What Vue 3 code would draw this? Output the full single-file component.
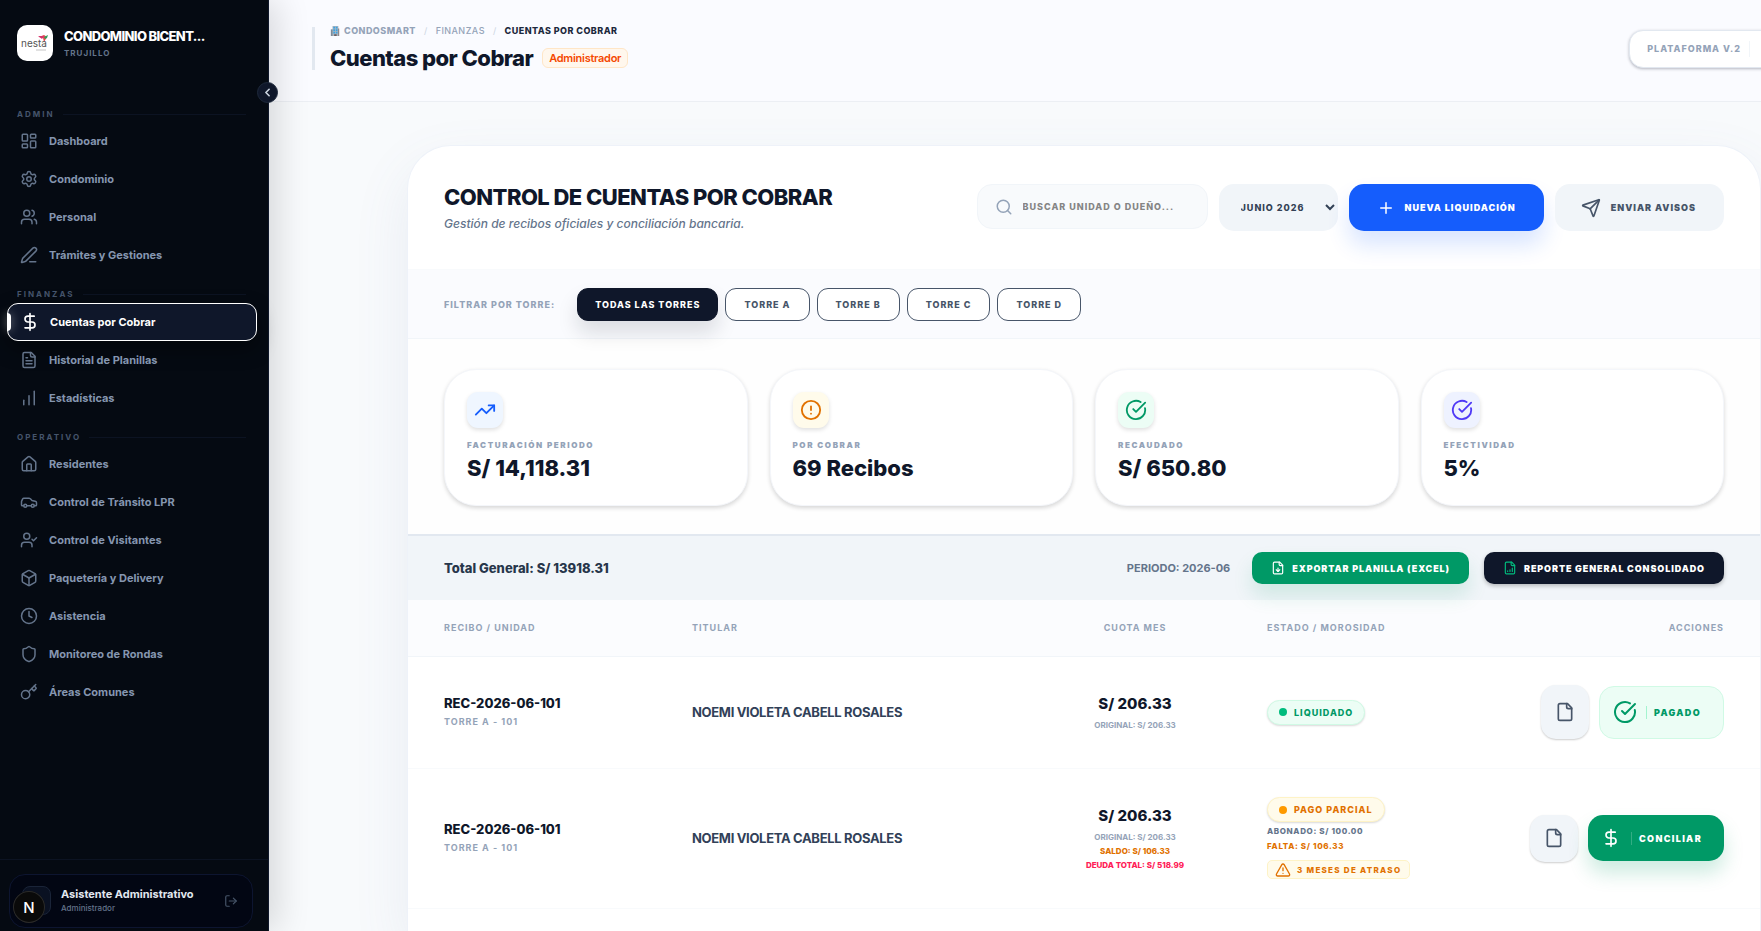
<template>
  <div class="layout">
    <aside class="sidebar">
      <div class="brand">
        <div class="brand-logo">
          <svg viewBox="0 0 36 36" aria-hidden="true">
            <path d="M22 12l4 1 1 4 3-5-3-2z" fill="#e5484d" />
            <path d="M27 12l4-2-1 3-2 1z" fill="#2f9e5b" />
            <path d="M21 11l6 0-2 3z" fill="#d6336c" />
            <text x="4" y="22">nesta</text>
            <path d="M19 25h10" stroke="#c4c4c4" stroke-width="1" />
          </svg>
        </div>
        <div class="brand-info">
          <strong>CONDOMINIO BICENT...</strong>
          <span>TRUJILLO</span>
        </div>
      </div>

      <button type="button" class="btn-colapsar" aria-label="Colapsar menú">
        <Icon name="chevron" />
      </button>

      <nav class="menu">
        <section v-for="grupo in menu" :key="grupo.titulo">
          <h2 class="menu-titulo">{{ grupo.titulo }}</h2>
          <a
            v-for="item in grupo.items"
            :key="item.texto"
            href="#"
            class="menu-item"
            :class="{ activo: item.texto === activo }"
            @click.prevent="activo = item.texto"
          >
            <Icon :name="item.icono" />
            <span>{{ item.texto }}</span>
          </a>
        </section>
      </nav>

      <div class="sidebar-footer">
        <div class="usuario">
          <div class="avatar"></div>
          <div class="usuario-info">
            <strong>Asistente Administrativo</strong>
            <span>Administrador</span>
          </div>
          <button type="button" class="btn-salir" aria-label="Cerrar sesión">
            <Icon name="salir" />
          </button>
          <div class="dev-badge">N</div>
        </div>
      </div>
    </aside>

    <main class="main">
      <header class="topbar">
        <div class="topbar-info">
          <div class="breadcrumb">
            <svg class="edificio" viewBox="0 0 12 12" aria-hidden="true">
              <path d="M1 4h3v8H1z" fill="#7d8b99" />
              <path d="M3 0h7v12H3z" fill="#a9b4c0" />
              <path d="M4 1h2v2H4zM7 1h2v2H7zM4 4h2v2H4zM7 4h2v2H7zM4 7h2v2H4zM7 7h2v2H7z" fill="#3aa3e3" />
              <path d="M5 10h3v2H5zM10 3h1v9h-1z" fill="#6b5d5d" />
            </svg>
            <strong>CONDOSMART</strong>
            <i>/</i>
            <span>FINANZAS</span>
            <i>/</i>
            <b>CUENTAS POR COBRAR</b>
          </div>
          <div class="topbar-titulo">
            <h1>Cuentas por Cobrar</h1>
            <span class="rol">Administrador</span>
          </div>
        </div>
        <div class="plataforma"><span>PLATAFORMA V.2</span></div>
      </header>

      <div class="contenido">
        <section class="panel">
          <div class="panel-head">
            <div class="panel-titulo">
              <h2>CONTROL DE CUENTAS POR COBRAR</h2>
              <p>Gestión de recibos oficiales y conciliación bancaria.</p>
            </div>
            <div class="controles">
              <label class="buscador">
                <Icon name="buscar" />
                <input v-model="busqueda" type="text" placeholder="BUSCAR UNIDAD O DUEÑO..." aria-label="Buscar unidad o dueño" />
              </label>
              <select v-model="periodo" class="periodo" aria-label="Periodo">
                <option value="2026-06">JUNIO 2026</option>
                <option value="2026-05">MAYO 2026</option>
              </select>
              <button type="button" class="btn btn-primario"><Icon name="mas" />NUEVA LIQUIDACIÓN</button>
              <button type="button" class="btn btn-secundario"><Icon name="enviar" />ENVIAR AVISOS</button>
            </div>
          </div>

          <div class="filtros">
            <span class="filtros-label">FILTRAR POR TORRE:</span>
            <button
              v-for="t in torres"
              :key="t"
              type="button"
              class="chip"
              :class="{ activo: t === torre }"
              @click="torre = t"
            >{{ t }}</button>
          </div>

          <div class="stats">
            <article v-for="s in stats" :key="s.label" class="stat">
              <div class="stat-icono" :class="s.color"><Icon :name="s.icono" /></div>
              <span class="stat-label">{{ s.label }}</span>
              <strong class="stat-valor">{{ s.valor }}</strong>
            </article>
          </div>

          <div class="resumen">
            <strong class="total">Total General: S/ 13918.31</strong>
            <span class="resumen-periodo">PERIODO: {{ periodo }}</span>
            <button type="button" class="btn-reporte verde"><Icon name="exportar" />EXPORTAR PLANILLA (EXCEL)</button>
            <button type="button" class="btn-reporte oscuro"><Icon name="reporte" />REPORTE GENERAL CONSOLIDADO</button>
          </div>

          <table class="tabla">
            <colgroup>
              <col class="col-recibo" />
              <col />
              <col class="col-cuota" />
              <col class="col-estado" />
              <col class="col-acciones" />
            </colgroup>
            <thead>
              <tr>
                <th>RECIBO / UNIDAD</th>
                <th>TITULAR</th>
                <th class="centro">CUOTA MES</th>
                <th>ESTADO / MOROSIDAD</th>
                <th class="derecha">ACCIONES</th>
              </tr>
            </thead>
            <tbody>
              <tr v-for="(r, i) in recibos" :key="i" :class="{ parcial: !r.pagado }">
                <td>
                  <strong class="codigo">{{ r.codigo }}</strong>
                  <span class="unidad">{{ r.unidad }}</span>
                </td>
                <td class="titular">{{ r.titular }}</td>
                <td class="centro">
                  <strong class="monto">S/ {{ r.cuota }}</strong>
                  <span class="detalle">ORIGINAL: S/ {{ r.cuota }}</span>
                  <span v-if="r.saldo" class="detalle saldo">SALDO: S/ {{ r.saldo }}</span>
                  <span v-if="r.deuda" class="detalle deuda">DEUDA TOTAL: S/ {{ r.deuda }}</span>
                </td>
                <td>
                  <span class="estado">{{ r.estado }}</span>
                  <template v-if="!r.pagado">
                    <span class="abono">ABONADO: S/ {{ r.abonado }}</span>
                    <span class="abono falta">FALTA: S/ {{ r.saldo }}</span>
                    <span class="atraso"><Icon name="alerta" />{{ r.meses }} MESES DE ATRASO</span>
                  </template>
                </td>
                <td>
                  <div class="acciones">
                    <button type="button" class="btn-doc" aria-label="Ver recibo"><Icon name="archivo" /></button>
                    <button type="button" class="btn-estado">
                      <Icon :name="r.pagado ? 'check' : 'dolar'" />
                      <span>{{ r.pagado ? 'PAGADO' : 'CONCILIAR' }}</span>
                    </button>
                  </div>
                </td>
              </tr>
            </tbody>
          </table>
        </section>
      </div>
    </main>
  </div>
</template>

<script setup>
import { h, ref } from 'vue'

const circulo = (x, y, r) => `M${x - r} ${y}a${r} ${r} 0 1 0 ${r * 2} 0a${r} ${r} 0 1 0 ${-r * 2} 0`

const hoja = ['M15 2H6a2 2 0 0 0-2 2v16a2 2 0 0 0 2 2h12a2 2 0 0 0 2-2V7Z', 'M14 2v4a2 2 0 0 0 2 2h4']
const persona = ['M16 21v-2a4 4 0 0 0-4-4H6a4 4 0 0 0-4 4v2', circulo(9, 7, 4)]

const iconos = {
  chevron: ['m15 18-6-6 6-6'],
  dashboard: ['M4 3h5a1 1 0 0 1 1 1v7a1 1 0 0 1-1 1H4a1 1 0 0 1-1-1V4a1 1 0 0 1 1-1z', 'M15 3h5a1 1 0 0 1 1 1v3a1 1 0 0 1-1 1h-5a1 1 0 0 1-1-1V4a1 1 0 0 1 1-1z', 'M15 12h5a1 1 0 0 1 1 1v7a1 1 0 0 1-1 1h-5a1 1 0 0 1-1-1v-7a1 1 0 0 1 1-1z', 'M4 16h5a1 1 0 0 1 1 1v3a1 1 0 0 1-1 1H4a1 1 0 0 1-1-1v-3a1 1 0 0 1 1-1z'],
  ajustes: ['M9.671 4.136a2.34 2.34 0 0 1 4.659 0 2.34 2.34 0 0 0 3.319 1.915 2.34 2.34 0 0 1 2.33 4.033 2.34 2.34 0 0 0 0 3.831 2.34 2.34 0 0 1-2.33 4.033 2.34 2.34 0 0 0-3.319 1.915 2.34 2.34 0 0 1-4.659 0 2.34 2.34 0 0 0-3.32-1.915 2.34 2.34 0 0 1-2.33-4.033 2.34 2.34 0 0 0 0-3.831A2.34 2.34 0 0 1 6.35 6.051a2.34 2.34 0 0 0 3.319-1.915', circulo(12, 12, 3)],
  personas: [...persona, 'M22 21v-2a4 4 0 0 0-3-3.87', 'M16 3.13a4 4 0 0 1 0 7.75'],
  lapiz: ['M13 21h8', 'M21.174 6.812a1 1 0 0 0-3.986-3.987L3.842 16.174a2 2 0 0 0-.5.83l-1.321 4.352a.5.5 0 0 0 .623.622l4.353-1.32a2 2 0 0 0 .83-.497z'],
  dolar: ['M12 2v20', 'M17 5H9.5a3.5 3.5 0 0 0 0 7h5a3.5 3.5 0 0 1 0 7H6'],
  planilla: [...hoja, 'M10 9H8', 'M16 13H8', 'M16 17H8'],
  barras: ['M5 21v-6', 'M12 21V9', 'M19 21V3'],
  casa: ['M15 21v-8a1 1 0 0 0-1-1h-4a1 1 0 0 0-1 1v8', 'M3 10a2 2 0 0 1 .709-1.528l7-6a2 2 0 0 1 2.582 0l7 6A2 2 0 0 1 21 10v9a2 2 0 0 1-2 2H5a2 2 0 0 1-2-2z'],
  auto: ['M19 17h2c.6 0 1-.4 1-1v-3c0-.9-.7-1.7-1.5-1.9C18.7 10.6 16 10 16 10s-1.3-1.4-2.2-2.3c-.5-.4-1.1-.7-1.8-.7H5c-.6 0-1.1.4-1.4.9l-1.4 2.9A3.7 3.7 0 0 0 2 12v4c0 .6.4 1 1 1h2', circulo(7, 17, 2), 'M9 17h6', circulo(17, 17, 2)],
  visitante: ['m16 11 2 2 4-4', ...persona],
  paquete: ['M21 8a2 2 0 0 0-1-1.73l-7-4a2 2 0 0 0-2 0l-7 4A2 2 0 0 0 3 8v8a2 2 0 0 0 1 1.73l7 4a2 2 0 0 0 2 0l7-4A2 2 0 0 0 21 16Z', 'm3.3 7 8.7 5 8.7-5', 'M12 22V12'],
  reloj: [circulo(12, 12, 10), 'M12 6v6l4 2'],
  escudo: ['M20 13c0 5-3.5 7.5-7.66 8.95a1 1 0 0 1-.67-.01C7.5 20.5 4 18 4 13V6a1 1 0 0 1 1-1c2 0 4.5-1.2 6.24-2.72a1.17 1.17 0 0 1 1.52 0C14.51 3.81 17 5 19 5a1 1 0 0 1 1 1z'],
  llave: ['m15.5 7.5 2.3 2.3a1 1 0 0 0 1.4 0l2.1-2.1a1 1 0 0 0 0-1.4L19 4', 'm21 2-9.6 9.6', circulo(7.5, 15.5, 5.5)],
  salir: ['m16 17 5-5-5-5', 'M21 12H9', 'M9 21H5a2 2 0 0 1-2-2V5a2 2 0 0 1 2-2h4'],
  buscar: [circulo(11, 11, 8), 'm21 21-4.3-4.3'],
  mas: ['M5 12h14', 'M12 5v14'],
  enviar: ['M14.536 21.686a.5.5 0 0 0 .937-.024l6.5-19a.496.496 0 0 0-.635-.635l-19 6.5a.5.5 0 0 0-.024.937l7.93 3.18a2 2 0 0 1 1.112 1.11z', 'm21.854 2.147-10.94 10.939'],
  tendencia: ['M16 7h6v6', 'm22 7-8.5 8.5-5-5L2 17'],
  aviso: [circulo(12, 12, 10), 'M12 8v4', 'M12 16h.01'],
  check: ['M21.801 10A10 10 0 1 1 17 3.335', 'm9 11 3 3L22 4'],
  alerta: ['m21.73 18-8-14a2 2 0 0 0-3.48 0l-8 14A2 2 0 0 0 4 21h16a2 2 0 0 0 1.73-3', 'M12 9v4', 'M12 17h.01'],
  archivo: hoja,
  exportar: [...hoja, 'M12 18v-6', 'm9 15 3 3 3-3'],
  reporte: [...hoja, 'M8 18v-1', 'M12 18v-3', 'M16 18v-6']
}

const Icon = (props) => h(
  'svg',
  { class: 'icono', viewBox: '0 0 24 24', 'aria-hidden': 'true' },
  iconos[props.name].map((d) => h('path', { d }))
)
Icon.props = ['name']

const menu = [
  {
    titulo: 'ADMIN',
    items: [
      { texto: 'Dashboard', icono: 'dashboard' },
      { texto: 'Condominio', icono: 'ajustes' },
      { texto: 'Personal', icono: 'personas' },
      { texto: 'Trámites y Gestiones', icono: 'lapiz' }
    ]
  },
  {
    titulo: 'FINANZAS',
    items: [
      { texto: 'Cuentas por Cobrar', icono: 'dolar' },
      { texto: 'Historial de Planillas', icono: 'planilla' },
      { texto: 'Estadísticas', icono: 'barras' }
    ]
  },
  {
    titulo: 'OPERATIVO',
    items: [
      { texto: 'Residentes', icono: 'casa' },
      { texto: 'Control de Tránsito LPR', icono: 'auto' },
      { texto: 'Control de Visitantes', icono: 'visitante' },
      { texto: 'Paquetería y Delivery', icono: 'paquete' },
      { texto: 'Asistencia', icono: 'reloj' },
      { texto: 'Monitoreo de Rondas', icono: 'escudo' },
      { texto: 'Áreas Comunes', icono: 'llave' }
    ]
  }
]

const torres = ['TODAS LAS TORRES', 'TORRE A', 'TORRE B', 'TORRE C', 'TORRE D']

const stats = [
  { label: 'FACTURACIÓN PERIODO', valor: 'S/ 14,118.31', icono: 'tendencia', color: 'azul' },
  { label: 'POR COBRAR', valor: '69 Recibos', icono: 'aviso', color: 'ambar' },
  { label: 'RECAUDADO', valor: 'S/ 650.80', icono: 'check', color: 'esmeralda' },
  { label: 'EFECTIVIDAD', valor: '5%', icono: 'check', color: 'indigo' }
]

const recibos = [
  {
    codigo: 'REC-2026-06-101', unidad: 'TORRE A - 101', titular: 'NOEMI VIOLETA CABELL ROSALES',
    cuota: '206.33', estado: 'LIQUIDADO', pagado: true
  },
  {
    codigo: 'REC-2026-06-101', unidad: 'TORRE A - 101', titular: 'NOEMI VIOLETA CABELL ROSALES',
    cuota: '206.33', saldo: '106.33', deuda: '518.99', abonado: '100.00', meses: 3,
    estado: 'PAGO PARCIAL', pagado: false
  }
]

const activo = ref('Cuentas por Cobrar')
const busqueda = ref('')
const periodo = ref('2026-06')
const torre = ref('TODAS LAS TORRES')
</script>

<style>
body { margin: 0; overflow: hidden; background: #f8fafc; }
</style>

<style scoped>
.layout {
  --tinta:   #0f172a;
  --slate7:  #334155;
  --slate6:  #475569;
  --slate5:  #64748b;
  --slate4:  #94a3b8;
  --borde:   #e2e8f0;
  --fondo:   #f1f5f9;
  --verde:   #009966;
  --naranja: #e17100;

  display: flex; height: 100vh;
  font-family: Inter, "Liberation Sans", sans-serif;
  color: var(--tinta); background: #f8fafc;
}
.layout *, .layout *::before { box-sizing: border-box; }
h1, h2, p { margin: 0; }
button, input, select { font-family: inherit; }
button { cursor: pointer; border: none; padding: 0; }
.icono { width: 18px; height: 18px; flex-shrink: 0; fill: none; stroke: currentColor; stroke-width: 2; stroke-linecap: round; stroke-linejoin: round; }

/* Sidebar */
.sidebar {
  position: relative; z-index: 10;
  flex: 0 0 269px; min-width: 0; display: flex; flex-direction: column;
  background: #050a12; border-right: 1px solid var(--tinta);
  box-shadow: 8px 0 32px rgba(0,0,0,0.14);
}
.brand { display: flex; align-items: center; gap: 11px; padding: 25px 17px 33px; }
.brand-logo { width: 36px; height: 36px; border-radius: 10px; background: #fff; flex-shrink: 0; }
.brand-logo text { font-size: 10px; fill: #555; }
.brand-info { display: flex; flex-direction: column; gap: 3px; }
.brand-info strong { font-size: 13px; line-height: 16px; font-weight: 800; letter-spacing: -0.05em; color: #fff; white-space: nowrap; }
.brand-info span { font-size: 8px; line-height: 12px; font-weight: 700; letter-spacing: 1px; color: var(--slate5); }
.btn-colapsar {
  position: absolute; top: 82px; right: -10px;
  width: 21px; height: 21px; border-radius: 50%;
  display: grid; place-items: center;
  background: var(--tinta); border: 1px solid #1e293b; color: #cbd5e1;
}
.btn-colapsar .icono { width: 13px; height: 13px; stroke-width: 3; }

.menu { flex: 1; padding: 0 11px 0 7px; }
.menu-titulo {
  display: flex; align-items: center; gap: 8px; padding: 12px 11px 0 10px;
  font-size: 8px; line-height: 16px; font-weight: 700; letter-spacing: 2px; color: #45556c;
}
.menu-titulo::after { content: ""; flex: 1; height: 1px; background: #0c1322; }
.menu-item {
  position: relative; display: flex; align-items: center; gap: 11px;
  height: 38px; padding: 0 12px; border: 1px solid transparent; border-radius: 11px;
  font-size: 11px; font-weight: 700; color: #8596b0; text-decoration: none;
}
.menu-item .icono { color: var(--slate5); }
.menu-item.activo { gap: 10px; margin-top: 1px; background: var(--tinta); border-color: #fff; color: #fff; box-shadow: 0 8px 20px rgba(0,0,0,0.4); }
.menu-item.activo .icono { color: #fff; width: 20px; height: 20px; }
.menu-item.activo::before {
  content: ""; position: absolute; left: -1px; width: 4px; height: 18px;
  border-radius: 0 4px 4px 0; background: #fff; box-shadow: 0 0 10px rgba(255,255,255,0.5);
}

.sidebar-footer { padding: 14px 15px 3px 9px; border-top: 1px solid #0c1322; }
.usuario {
  position: relative; display: flex; align-items: center; gap: 10px;
  padding: 11px 14px 12px 12px; border: 1px solid #0d1530; border-radius: 16px; background: #020613;
}
.avatar { width: 29px; height: 29px; border-radius: 8px; background: #0a1122; border: 1px solid #1a2438; }
.usuario-info { flex: 1; display: flex; flex-direction: column; }
.usuario-info strong { font-size: 11px; line-height: 15px; color: #e2e8f0; white-space: nowrap; }
.usuario-info span { font-size: 8px; line-height: 12px; font-weight: 500; color: var(--slate5); }
.btn-salir { display: grid; background: none; color: var(--slate6); }
.btn-salir .icono { width: 14px; height: 14px; }
.dev-badge {
  position: absolute; left: 3px; top: 16px; width: 32px; height: 32px; border-radius: 50%;
  display: grid; place-items: center; background: #0a0a0a; box-shadow: 0 0 0 1px #2b2b2b inset;
  color: #fff; font-size: 15px; font-weight: 500;
}

/* Topbar */
.main { flex: 1; min-width: 0; display: flex; flex-direction: column; overflow: hidden; }
.topbar {
  display: flex; justify-content: space-between; align-items: flex-start;
  padding: 27px 0 31px 43px; border-bottom: 1px solid #eceff4; background: #fafbff;
}
.topbar-info { border-left: 3px solid var(--borde); padding-left: 15px; height: 43px; }
.breadcrumb { display: flex; align-items: center; height: 7px; font-size: 9px; letter-spacing: 0.05em; color: var(--slate4); }
.breadcrumb i { margin: 0 8px; font-style: normal; color: #cbd5e1; }
.breadcrumb span { font-weight: 500; }
.breadcrumb strong { font-weight: 800; }
.breadcrumb b { font-weight: 800; color: #1d293d; }
.edificio { width: 10px; height: 10px; margin-right: 4px; }
.topbar-titulo { display: flex; align-items: center; gap: 9px; margin-top: 12px; }
.topbar-titulo h1 { font-size: 22px; line-height: 24px; font-weight: 800; letter-spacing: -0.025em; }
.rol {
  padding: 0 6px; border: 1px solid #ffe6c7; border-radius: 6px; background: #fff7ed;
  font-size: 11px; line-height: 18px; font-weight: 600; letter-spacing: -0.025em; color: #f54900;
}
.plataforma {
  margin: 3px -28px 0 0; padding: 10px 38px 10px 17px; border: 1px solid var(--borde); border-radius: 14px;
  background: #fff; box-shadow: 0 1px 3px rgba(15,23,42,0.3);
}
.plataforma span {
  display: block; padding-right: 8px; border-right: 1px solid #f1f5f9;
  font-size: 9px; line-height: 16px; font-weight: 800; letter-spacing: 1px; color: var(--slate4); white-space: nowrap;
}

/* Panel */
.contenido { flex: 1; display: flex; padding: 43px 0 0 138px; }
.panel {
  flex: 1; min-width: 0; background: #fff; border: 1px solid #eef2f9; border-bottom: none;
  border-radius: 44px 44px 0 0; box-shadow: 0 22px 55px rgba(98,116,160,0.1);
}
.panel-head { display: flex; justify-content: space-between; align-items: flex-start; padding: 38px 36px 35px; }
.panel-titulo h2 { font-size: 22px; line-height: 26px; font-weight: 800; letter-spacing: -0.025em; white-space: nowrap; }
.panel-titulo p { margin-top: 4px; font-size: 12px; line-height: 20px; font-weight: 500; font-style: italic; color: var(--slate5); white-space: nowrap; }
.controles { display: flex; align-items: flex-start; gap: 11px; }
.buscador {
  display: flex; align-items: center; gap: 10px; width: 231px; height: 45px; padding: 0 17px;
  border: 1px solid #f1f5f9; border-radius: 15px; background: #f8fafc; color: var(--slate4);
}
.buscador input {
  flex: 1; min-width: 0; padding: 0; border: none; outline: none; background: none;
  font-size: 9px; font-weight: 800; letter-spacing: 1px; color: var(--slate7);
}
.buscador input::placeholder { color: #858585; }
.periodo {
  width: 119px; height: 47px; padding: 0 0 0 18px; border: none; border-radius: 15px;
  background: var(--fondo); font-size: 9px; font-weight: 800; letter-spacing: 1px; color: var(--slate7);
}
.btn {
  display: flex; align-items: center; gap: 10px; height: 47px; padding: 0 28px; border-radius: 15px;
  font-size: 9px; font-weight: 900; letter-spacing: 1px; white-space: nowrap;
}
.btn-primario { background: #155dfc; color: #fff; box-shadow: 0 14px 22px rgba(21,93,252,0.16); }
.btn-secundario { padding-left: 26px; background: var(--fondo); color: var(--slate6); }
.btn-secundario .icono { width: 20px; height: 20px; }

.filtros {
  display: flex; align-items: center; gap: 7px; padding: 18px 36px 17px;
  border-top: 1px solid #f8fafc; border-bottom: 1px solid #f1f5f9; background: #fafbfe;
}
.filtros-label { margin-right: 15px; font-size: 9px; font-weight: 800; letter-spacing: 1px; color: var(--slate4); }
.chip {
  height: 33px; padding: 0 18px; border: 1px solid var(--slate6); border-radius: 11px; background: #fff;
  font-size: 9px; font-weight: 800; letter-spacing: 1px; color: var(--slate6);
}
.chip.activo { padding: 0 17px; background: var(--tinta); border-color: var(--tinta); color: #fff; box-shadow: 0 12px 20px rgba(15,23,42,0.13); }

.stats { display: grid; grid-template-columns: repeat(4, 1fr); gap: 22px; padding: 30px 36px 28px; background: #fefefe; }
.stat {
  display: flex; flex-direction: column; align-items: flex-start; height: 137px; padding: 22px;
  border: 1px solid #f4f6fa; border-radius: 32px; background: #fff; box-shadow: 0 2px 4px rgba(0,0,0,0.16);
}
.stat-icono { display: grid; place-items: center; width: 36px; height: 36px; border-radius: 11px; box-shadow: 0 2px 4px rgba(0,0,0,0.13); }
.stat-icono .icono { width: 22px; height: 22px; }
.azul { background: #eff6ff; color: #155dfc; }
.ambar { background: #fffbeb; color: var(--naranja); }
.esmeralda { background: #ecfdf5; color: var(--verde); }
.indigo { background: #eef2ff; color: #4f39f6; }
.stat-label { margin-top: 11px; font-size: 8px; line-height: 12px; font-weight: 900; letter-spacing: 0.2em; color: var(--slate4); }
.stat-valor { margin-top: 3px; font-size: 22px; line-height: 28px; font-weight: 800; }

.resumen {
  display: flex; align-items: center; padding: 16px 36px; border-top: 2px solid var(--borde); background: var(--fondo);
}
.total { flex: 1; font-size: 13px; font-weight: 800; color: #27364b; }
.resumen-periodo { margin-right: 22px; font-size: 11px; font-weight: 700; color: var(--slate5); }
.btn-reporte {
  display: flex; align-items: center; gap: 7px; height: 32px; padding: 0 19px; border-radius: 10px;
  font-size: 9px; font-weight: 900; letter-spacing: 0.1em; color: #fff; white-space: nowrap;
}
.btn-reporte .icono { width: 14px; height: 14px; }
.verde { background: var(--verde); box-shadow: 0 12px 20px rgba(0,153,102,0.14); }
.oscuro { margin-left: 15px; background: var(--tinta); box-shadow: 0 2px 4px rgba(0,0,0,0.25); }
.oscuro .icono { color: #00bc7d; }

/* Tabla */
.tabla { width: 100%; border-collapse: collapse; table-layout: fixed; }
.col-recibo { width: 248px; }
.col-cuota { width: 192px; }
.col-estado { width: 217px; }
.col-acciones { width: 312px; }
.tabla th {
  height: 56px; padding: 0 36px; border-bottom: 1px solid #f1f5f9; background: #fbfcfe;
  font-size: 9px; font-weight: 700; letter-spacing: 1px; text-align: left; white-space: nowrap; color: var(--slate4);
}
.tabla td { height: 112px; padding: 0 36px; border-bottom: 1px solid #f8fafc; vertical-align: middle; }
.tabla .parcial td { height: 140px; }
.tabla .centro { padding: 0; text-align: center; }
.tabla .derecha { text-align: right; }
.codigo { display: block; font-size: 13px; line-height: 20px; font-weight: 800; white-space: nowrap; }
.unidad { display: block; font-size: 9px; line-height: 18px; font-weight: 700; letter-spacing: 1px; color: var(--slate4); }
.titular { font-size: 13px; font-weight: 700; letter-spacing: -0.025em; white-space: nowrap; color: #314158; }
.monto { display: block; padding-bottom: 3px; font-size: 15px; line-height: 22px; font-weight: 800; }
.detalle { display: block; font-size: 8px; line-height: 14px; font-weight: 700; color: var(--slate4); }
.saldo { font-weight: 800; color: var(--naranja); }
.deuda { font-weight: 800; color: #ff2056; }
.estado {
  display: flex; align-items: center; gap: 7px; width: max-content; height: 25px; padding: 0 11px;
  border: 1px solid #d0fae5; border-radius: 13px; background: #ecfdf5; box-shadow: 0 1px 2px rgba(0,0,0,0.15);
  font-size: 9px; font-weight: 800; letter-spacing: 1px; color: var(--verde);
}
.estado::before { content: ""; width: 8px; height: 8px; border-radius: 50%; background: #00bc7d; }
.parcial .estado { border-color: #fef3c6; background: #fffbeb; color: var(--naranja); }
.parcial .estado::before { background: #fe9a00; }
.abono { display: block; font-size: 8px; line-height: 15px; font-weight: 800; letter-spacing: 0.08em; color: var(--slate5); }
.estado + .abono { margin-top: 2px; }
.abono.falta { color: var(--naranja); }
.atraso {
  display: flex; align-items: center; gap: 6px; width: max-content; height: 19px; margin-top: 6px; padding: 0 8px 0 7px;
  border: 1px solid #fef3c6; border-radius: 5px; background: #fffbeb;
  font-size: 8px; font-weight: 800; letter-spacing: 0.16em; color: var(--naranja);
}
.atraso .icono { width: 16px; height: 16px; }

.acciones { display: flex; justify-content: flex-end; align-items: center; gap: 10px; }
.btn-doc {
  display: grid; place-items: center; width: 48px; height: 54px; border-radius: 15px;
  background: var(--fondo); color: var(--slate6); box-shadow: 0 1px 2px rgba(0,0,0,0.2);
}
.btn-doc .icono { width: 20px; height: 20px; }
.btn-estado {
  display: flex; align-items: center; gap: 9px; height: 53px; padding: 0 22px 0 13px;
  border: 1px solid #d0fae5; border-radius: 15px; background: #ecfdf5; color: var(--verde);
  font-size: 9px; font-weight: 900; letter-spacing: 0.15em;
}
.btn-estado .icono { width: 24px; height: 24px; }
.btn-estado span { padding-left: 7px; border-left: 1px solid #a4f4cf; line-height: 13px; }
.parcial .btn-doc { height: 47px; }
.parcial .btn-estado { height: 46px; gap: 10px; border: none; background: var(--verde); color: #fff; box-shadow: 0 12px 20px rgba(0,153,102,0.2); }
.parcial .btn-estado .icono { width: 20px; height: 20px; }
.parcial .btn-estado span { border-color: rgba(255,255,255,0.2); }
</style>
